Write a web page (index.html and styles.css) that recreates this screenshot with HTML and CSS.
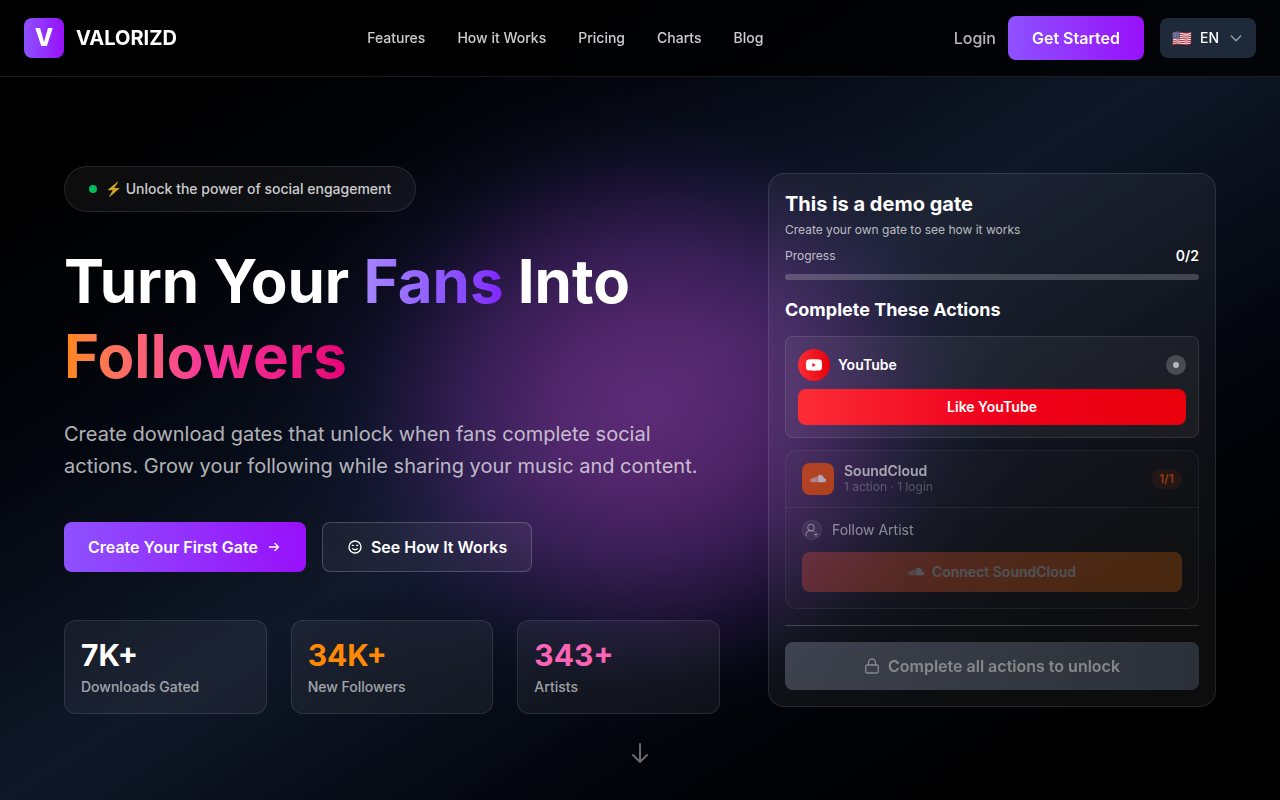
FILE: index.html
```html
<!DOCTYPE html>
<html lang="en">
<head>
  <meta charset="UTF-8">
  <meta name="viewport" content="width=device-width, initial-scale=1.0">
  <title>VALORIZD</title>
  <link rel="stylesheet" href="styles.css">
</head>
<body>
  <header class="header">
    <a href="#" class="brand">
      <span class="brand-mark">V</span>
      <span class="brand-name">VALORIZD</span>
    </a>
    <nav class="nav">
      <a href="#features">Features</a>
      <a href="#how">How it Works</a>
      <a href="#pricing">Pricing</a>
      <a href="#charts">Charts</a>
      <a href="#blog">Blog</a>
    </nav>
    <div class="header-actions">
      <a href="#login" class="login">Login</a>
      <a href="#start" class="btn-start">Get Started</a>
      <label class="lang">
        <span class="flag">🇺🇸</span>
        <select class="lang-select" aria-label="Language">
          <option>EN</option>
          <option>FR</option>
          <option>ES</option>
        </select>
        <svg class="icon-16" viewBox="0 0 24 24" fill="none" stroke="currentColor" stroke-width="2" stroke-linecap="round" stroke-linejoin="round"><path d="M19 9l-7 7-7-7"/></svg>
      </label>
    </div>
  </header>

  <main class="hero">
    <div class="glow"></div>
    <div class="hero-inner">
      <section class="intro">
        <p class="pill"><span class="pill-dot"></span><span>⚡ Unlock the power of social engagement</span></p>
        <h1 class="title">Turn Your <span class="fans">Fans</span> Into <span class="followers">Followers</span></h1>
        <p class="lead">Create download gates that unlock when fans complete social actions. Grow your following while sharing your music and content.</p>
        <div class="cta">
          <a href="#create" class="btn-primary">
            Create Your First Gate
            <svg class="icon-16" viewBox="0 0 16 16" fill="none" stroke="currentColor" stroke-width="1.4" stroke-linecap="round" stroke-linejoin="round"><path d="M3.500 8h9M9 4.500l3.500 3.500L9 11.500"/></svg>
          </a>
          <button type="button" class="btn-ghost">
            <svg class="icon-16" viewBox="0 0 24 24" fill="none" stroke="currentColor" stroke-width="2" stroke-linecap="round" stroke-linejoin="round"><circle cx="12" cy="12" r="9"/><path d="M8 9.500h1.500M14.500 9.500H16M8.500 14.500c1.800 2.200 5.200 2.200 7 0"/></svg>
            See How It Works
          </button>
        </div>
        <div class="stats">
          <div class="stat">
            <div class="stat-num">7K+</div>
            <div class="stat-label">Downloads Gated</div>
          </div>
          <div class="stat">
            <div class="stat-num orange">34K+</div>
            <div class="stat-label">New Followers</div>
          </div>
          <div class="stat">
            <div class="stat-num pink">343+</div>
            <div class="stat-label">Artists</div>
          </div>
        </div>
      </section>

      <section class="gate">
        <h2 class="gate-title">This is a demo gate</h2>
        <p class="gate-sub">Create your own gate to see how it works</p>
        <div class="progress-row">
          <span>Progress</span>
          <strong>0/2</strong>
        </div>
        <div class="progress-bar"></div>
        <h3 class="gate-heading">Complete These Actions</h3>

        <div class="youtube">
          <div class="row">
            <span class="yt-icon">
              <svg class="icon-16" viewBox="0 0 24 24" fill="currentColor" fill-rule="evenodd"><path d="M23.500 6.200a3 3 0 0 0-2.100-2.100C19.500 3.500 12 3.500 12 3.500s-7.500 0-9.400.6A3 3 0 0 0 .5 6.200C0 8.100 0 12 0 12s0 3.900.5 5.800a3 3 0 0 0 2.100 2.100c1.900.6 9.400.6 9.400.6s7.500 0 9.400-.6a3 3 0 0 0 2.100-2.100c.5-1.900.5-5.800.5-5.800s0-3.900-.5-5.800zM9.500 15V9l5.300 3z"/></svg>
            </span>
            <span class="name">YouTube</span>
            <span class="status"></span>
          </div>
          <button type="button" class="btn-youtube">Like YouTube</button>
        </div>

        <div class="soundcloud">
          <div class="sc-head">
            <span class="sc-icon">
              <svg class="icon-16" viewBox="0 0 24 24" fill="currentColor"><path d="M12 7.500C12.800 6.300 14 5.800 15.500 5.800c2.900 0 4.900 2 5.100 4.600 2 0 3.400 1.500 3.400 3.300 0 1.900-1.500 3.300-3.400 3.300H12z"/><path opacity=".65" d="M0 13.200c.4-1 1-1.200 1.600-.9.5-1.200 1.200-1.600 2.200-1.300 1-.9 2-.9 2.700-.2C7.400 9.300 9 8 11.400 8.500V17H3C1.400 17 .2 15.500 0 13.200z"/></svg>
            </span>
            <div class="sc-text">
              <div class="name">SoundCloud</div>
              <div class="sc-meta">1 action · 1 login</div>
            </div>
            <span class="sc-count">1/1</span>
          </div>
          <div class="sc-body">
            <div class="follow">
              <span class="follow-icon">
                <svg viewBox="0 0 20 20" fill="none" stroke="currentColor" stroke-width="1.200" stroke-linecap="round"><circle cx="9" cy="7.500" r="3.200"/><path d="M4 15.500c0-3.300 2-4.800 5-4.800 1.200 0 2.200.3 3 .8M14 12.500v4M12 14.500h4"/></svg>
              </span>
              Follow Artist
            </div>
            <button type="button" class="btn-connect" disabled>
              <svg class="icon-16" viewBox="0 0 24 24" fill="currentColor"><path d="M12 7.500C12.800 6.300 14 5.800 15.500 5.800c2.900 0 4.900 2 5.100 4.600 2 0 3.400 1.500 3.400 3.300 0 1.900-1.500 3.300-3.400 3.300H12z"/><path opacity=".65" d="M0 13.200c.4-1 1-1.200 1.600-.9.5-1.200 1.200-1.600 2.200-1.300 1-.9 2-.9 2.700-.2C7.400 9.300 9 8 11.400 8.500V17H3C1.400 17 .2 15.500 0 13.200z"/></svg>
              Connect SoundCloud
            </button>
          </div>
        </div>

        <div class="gate-foot">
          <button type="button" class="btn-unlock" disabled>
            <svg class="icon-16" viewBox="0 0 16 16" fill="none" stroke="currentColor" stroke-width="1.300" stroke-linecap="round" stroke-linejoin="round"><rect x="1.700" y="7" width="12.600" height="8" rx="1.500"/><path d="M4.500 7V4.500a3.500 3.500 0 0 1 7 0V7"/></svg>
            Complete all actions to unlock
          </button>
        </div>
      </section>
    </div>
    <a href="#features" class="scroll-down" aria-label="Scroll down">
      <svg viewBox="0 0 24 24" fill="none" stroke="currentColor" stroke-width="2" stroke-linecap="round" stroke-linejoin="round"><path d="M12 3v18M19 14l-7 7-7-7"/></svg>
    </a>
  </main>
</body>
</html>
```

FILE: styles.css
```css
* {
  margin: 0;
  padding: 0;
  box-sizing: border-box;
}

body {
  font-family: Inter, "Liberation Sans", sans-serif;
  font-size: 16px;
  line-height: 24px;
  color: #fff;
  background: #000;
}

a {
  color: inherit;
  text-decoration: none;
}

button, select {
  font: inherit;
  color: inherit;
  border: 0;
  cursor: pointer;
}

svg {
  display: block;
  flex-shrink: 0;
}

.icon-16 {
  width: 16px;
  height: 16px;
}

/* header */
.header {
  position: fixed;
  top: 0;
  left: 0;
  right: 0;
  z-index: 10;
  display: flex;
  align-items: center;
  justify-content: space-between;
  padding: 16px 24px;
  background: rgba(0, 0, 0, 0.8);
  border-bottom: 1px solid rgba(255, 255, 255, 0.1);
}

.brand {
  display: flex;
  align-items: center;
  gap: 12px;
}

.brand-mark {
  display: flex;
  align-items: center;
  justify-content: center;
  width: 40px;
  height: 40px;
  border-radius: 8px;
  font-size: 24px;
  font-weight: 800;
  background: linear-gradient(to right, #8e51ff, #9810fa);
}

.brand-name {
  font-size: 20px;
  font-weight: 700;
}

.nav {
  display: flex;
  gap: 32px;
  font-size: 14px;
  font-weight: 500;
  color: rgba(255, 255, 255, 0.8);
}

.header-actions {
  display: flex;
  align-items: center;
}

.login {
  margin-right: 12px;
  font-weight: 500;
  color: rgba(255, 255, 255, 0.7);
}

.btn-start {
  margin-right: 16px;
  padding: 10px 24px;
  border-radius: 8px;
  font-weight: 600;
  background: linear-gradient(to right, #8e51ff, #9810fa);
}

.lang {
  display: flex;
  align-items: center;
  gap: 8px;
  height: 40px;
  padding: 0 12px;
  border-radius: 8px;
  background: #1e2939;
}

.lang svg {
  color: #99a1af;
}

.lang-select {
  appearance: none;
  background: none;
  font-size: 14px;
  font-weight: 500;
  outline: 0;
}

/* hero */
.hero {
  position: relative;
  display: flex;
  align-items: center;
  justify-content: center;
  min-height: 100vh;
  padding: 80px 64px 0;
  overflow: hidden;
  background: linear-gradient(to bottom right in oklab, #000, #101828, #000);
}

.glow {
  position: absolute;
  inset: 0;
  background:
    radial-gradient(310px 280px at 51% 51%, rgba(173, 60, 180, 0.42), rgba(165, 55, 175, 0.37) 30%, rgba(145, 48, 168, 0.24) 58%, rgba(120, 40, 160, 0.11) 78%, rgba(100, 35, 160, 0.03) 92%, transparent),
    radial-gradient(400px 330px at center, rgba(100, 60, 190, 0.24), rgba(100, 60, 190, 0.17) 45%, rgba(90, 60, 190, 0.08) 70%, rgba(90, 60, 190, 0.02) 88%, transparent);
}

.hero-inner {
  position: relative;
  display: grid;
  grid-template-columns: 1fr 448px;
  align-items: center;
  gap: 48px;
  width: 100%;
  max-width: 1280px;
}

.pill {
  display: inline-flex;
  align-items: center;
  gap: 8px;
  padding: 12px 24px;
  border: 1px solid rgba(255, 255, 255, 0.1);
  border-radius: 24px;
  font-size: 14px;
  font-weight: 500;
  line-height: 20px;
  color: rgba(255, 255, 255, 0.8);
  background: rgba(255, 255, 255, 0.05);
  vertical-align: top;
}

.pill-dot {
  width: 8px;
  height: 8px;
  border-radius: 50%;
  background: #00bc5a;
}

.title {
  margin: 32px 0 24px;
  font-size: 60px;
  font-weight: 700;
  line-height: 75px;
}

.fans, .followers {
  color: transparent;
  background: linear-gradient(to right in oklab, #a684ff, #7f22fe);
  -webkit-background-clip: text;
  background-clip: text;
}

.followers {
  background-image: linear-gradient(to right in oklab, #ff8904, #f6339a, #e60076);
}

.lead {
  margin-bottom: 40px;
  font-size: 20px;
  line-height: 32px;
  color: rgba(255, 255, 255, 0.7);
}

.cta {
  display: flex;
  gap: 16px;
  margin-bottom: 48px;
}

.btn-primary, .btn-ghost {
  display: flex;
  align-items: center;
  gap: 8px;
  height: 50px;
  padding: 0 24px;
  border-radius: 8px;
  font-weight: 600;
  background: linear-gradient(to right, #8e51ff, #9810fa);
}

.btn-ghost {
  border: 1px solid rgba(255, 255, 255, 0.2);
  background: rgba(255, 255, 255, 0.05);
}

.stats {
  display: grid;
  grid-template-columns: repeat(3, 1fr);
  gap: 24px;
}

.stat {
  padding: 16px;
  border: 1px solid rgba(255, 255, 255, 0.1);
  border-radius: 12px;
  background: rgba(255, 255, 255, 0.05);
}

.stat-num {
  margin-bottom: 4px;
  font-size: 30px;
  font-weight: 700;
  line-height: 36px;
}

.orange {
  color: #ff8904;
}

.pink {
  color: #fb64b6;
}

.stat-label {
  font-size: 14px;
  font-weight: 500;
  line-height: 20px;
  color: rgba(255, 255, 255, 0.6);
}

/* demo gate */
.gate {
  padding: 16px;
  border: 1px solid rgba(255, 255, 255, 0.1);
  border-radius: 16px;
  background: rgba(255, 255, 255, 0.05);
}

.gate-title {
  margin-bottom: 4px;
  font-size: 20px;
  font-weight: 700;
  line-height: 28px;
}

.gate-sub {
  margin-bottom: 8px;
  font-size: 12px;
  line-height: 16px;
  color: rgba(255, 255, 255, 0.7);
}

.progress-row {
  display: flex;
  align-items: center;
  justify-content: space-between;
  margin-bottom: 8px;
  font-size: 12px;
  line-height: 20px;
  color: rgba(255, 255, 255, 0.7);
}

.progress-row strong {
  font-size: 14px;
  font-weight: 600;
  color: #fff;
}

.progress-bar {
  height: 6px;
  margin-bottom: 16px;
  border-radius: 3px;
  background: rgba(255, 255, 255, 0.2);
}

.gate-heading {
  margin-bottom: 12px;
  font-size: 18px;
  font-weight: 700;
  line-height: 28px;
}

.youtube {
  padding: 12px;
  border: 1px solid rgba(255, 255, 255, 0.1);
  border-radius: 8px;
  background: rgba(255, 255, 255, 0.05);
}

.row {
  display: flex;
  align-items: center;
  gap: 8px;
  margin-bottom: 8px;
}

.name {
  font-size: 14px;
  font-weight: 600;
  line-height: 20px;
}

.yt-icon {
  display: flex;
  align-items: center;
  justify-content: center;
  width: 32px;
  height: 32px;
  border-radius: 50%;
  background: linear-gradient(to right, #fb2c36, #e7000b);
}

.status {
  display: flex;
  align-items: center;
  justify-content: center;
  width: 20px;
  height: 20px;
  margin-left: auto;
  border-radius: 50%;
  background: rgba(255, 255, 255, 0.2);
}

.status::after {
  content: "";
  width: 6px;
  height: 6px;
  border-radius: 50%;
  background: rgba(255, 255, 255, 0.6);
}

.btn-youtube {
  width: 100%;
  height: 36px;
  border-radius: 8px;
  font-size: 14px;
  font-weight: 600;
  background: linear-gradient(to right, #fb2c36, #f0001c 50%, #e7000b);
}

.soundcloud {
  margin: 12px 0 16px;
  border: 1px solid rgba(255, 255, 255, 0.1);
  border-radius: 12px;
  background: rgba(255, 255, 255, 0.03);
  opacity: 0.6;
}

.sc-head {
  display: flex;
  align-items: center;
  gap: 10px;
  padding: 12px 16px;
  border-bottom: 1px solid rgba(255, 255, 255, 0.1);
}

.sc-icon {
  display: flex;
  align-items: center;
  justify-content: center;
  width: 32px;
  height: 32px;
  border-radius: 8px;
  background: #ff5500;
}

.sc-text .name {
  line-height: 16px;
}

.sc-meta {
  font-size: 12px;
  line-height: 16px;
  color: rgba(255, 255, 255, 0.4);
}

.sc-count {
  margin-left: auto;
  padding: 2px 8px;
  border-radius: 10px;
  font-size: 12px;
  font-weight: 600;
  line-height: 16px;
  color: #ff5500;
  background: rgba(255, 85, 0, 0.12);
}

.sc-body {
  padding: 12px 16px 16px;
}

.follow {
  display: flex;
  align-items: center;
  gap: 10px;
  margin-bottom: 12px;
  font-size: 14px;
  line-height: 20px;
  color: rgba(255, 255, 255, 0.8);
}

.follow-icon {
  width: 20px;
  height: 20px;
  border-radius: 50%;
  color: rgba(255, 255, 255, 0.6);
  background: rgba(255, 255, 255, 0.1);
  box-shadow: inset 0 0 0 1px rgba(255, 255, 255, 0.1);
}

.btn-connect {
  display: flex;
  align-items: center;
  justify-content: center;
  gap: 8px;
  width: 100%;
  height: 40px;
  border-radius: 8px;
  font-size: 14px;
  font-weight: 600;
  color: #e5e7eb;
  background: linear-gradient(to right, #f5543a, #d06408);
  opacity: 0.5;
}

.gate-foot {
  padding-top: 16px;
  border-top: 1px solid rgba(255, 255, 255, 0.2);
}

.btn-unlock {
  display: flex;
  align-items: center;
  justify-content: center;
  gap: 8px;
  width: 100%;
  height: 48px;
  border-radius: 8px;
  font-weight: 600;
  background: linear-gradient(to right, #6a7282, #4a5565);
  opacity: 0.5;
}

/* overlaps the bottom of the hero */
.scroll-down {
  position: absolute;
  bottom: 35px;
  left: 50%;
  transform: translateX(-50%);
  color: rgba(255, 255, 255, 0.4);
}

.scroll-down svg {
  width: 24px;
  height: 24px;
}
```
